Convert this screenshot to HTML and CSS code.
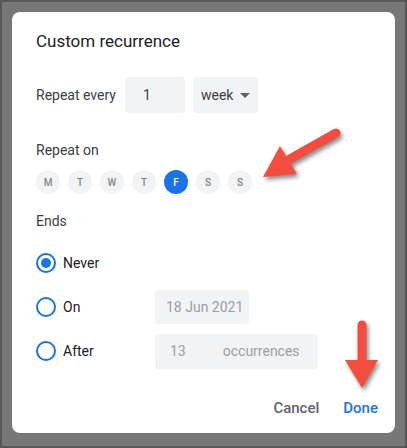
FILE: index.html
```html
<!DOCTYPE html>
<html lang="en">
<head>
    <meta charset="UTF-8">
    <meta name="viewport" content="width=device-width, initial-scale=1.0">
    <title>Custom recurrence</title>
    <link rel="stylesheet" href="styles.css">
</head>
<body>
    <div class="frame">
        <div class="dialog">
            <h1 class="title">Custom recurrence</h1>

            <!-- Repeat every -->
            <div class="repeat-row">
                <span class="label">Repeat every</span>
                <div class="field num">1</div>
                <div class="field select">week <span class="caret"></span></div>
            </div>

            <!-- Repeat on -->
            <div class="section-label">Repeat on</div>
            <div class="days">
                <span class="day">M</span>
                <span class="day">T</span>
                <span class="day">W</span>
                <span class="day">T</span>
                <span class="day active">F</span>
                <span class="day">S</span>
                <span class="day">S</span>
            </div>

            <!-- Ends -->
            <div class="section-label ends">Ends</div>
            <div class="end-row">
                <span class="radio checked"></span>
                <span class="end-label">Never</span>
            </div>
            <div class="end-row">
                <span class="radio"></span>
                <span class="end-label">On</span>
                <div class="field date">18 Jun 2021</div>
            </div>
            <div class="end-row">
                <span class="radio"></span>
                <span class="end-label">After</span>
                <div class="field count"><span>13</span><span>occurrences</span></div>
            </div>

            <div class="actions">
                <button class="btn cancel">Cancel</button>
                <button class="btn done">Done</button>
            </div>
        </div>
    </div>

    <!-- Annotation arrows -->
    <svg class="arrows" width="407" height="448" viewBox="0 0 407 448">
        <g class="arrow">
            <line x1="336" y1="133" x2="290" y2="159" stroke="#f44c3f" stroke-width="9" stroke-linecap="round"/>
            <polygon points="263,177 280,146 297,174" fill="#f44c3f"/>
        </g>
        <g class="arrow">
            <line x1="362" y1="325" x2="362" y2="364" stroke="#f44c3f" stroke-width="9" stroke-linecap="round"/>
            <polygon points="345,360 378,360 362,388" fill="#f44c3f"/>
        </g>
    </svg>
</body>
</html>
```

FILE: styles.css
```css
body {
    margin: 0;
    font-family: Roboto, "Liberation Sans", sans-serif;
    background-color: #555;
}

.frame {
    width: 407px;
    height: 448px;
    border: 2px solid #585858;
    background-color: #777;
    padding: 10px;
    box-sizing: border-box;
}

.dialog {
    background-color: white;
    border-radius: 8px;
    width: 383px;
    height: 421px;
    padding: 17px 24px 0 24px;
    box-sizing: border-box;
    display: flex;
    flex-direction: column;
    color: #3c4043;
    font-size: 14px;
}

.title {
    margin: 0;
    font-size: 17px;
    line-height: 24px;
    font-weight: 400;
    color: #202124;
}

.repeat-row {
    display: flex;
    align-items: center;
    gap: 8px;
    margin-top: 24px;
}

.label {
    width: 81px;
}

.field {
    background-color: #f1f3f4;
    border-radius: 4px;
    height: 36px;
    display: flex;
    align-items: center;
    box-sizing: border-box;
    padding: 0 12px;
    white-space: nowrap;
}

.num {
    width: 60px;
    padding-left: 18px;
}

.select {
    width: 65px;
    padding-left: 8px;
    justify-content: space-between;
}

.caret {
    width: 0;
    height: 0;
    border-left: 5px solid transparent;
    border-right: 5px solid transparent;
    border-top: 5px solid #5f6368;
    margin-right: -4px;
}

.section-label {
    margin-top: 27px;
    line-height: 20px;
}

.days {
    display: flex;
    gap: 8px;
    margin-top: 10px;
}

.day {
    width: 24px;
    height: 24px;
    border-radius: 50%;
    background-color: #f1f3f4;
    color: #80868b;
    font-size: 10px;
    font-weight: 500;
    display: flex;
    align-items: center;
    justify-content: center;
}

.day.active {
    background-color: #1a73e8;
    color: white;
}

.ends {
    margin-top: 17px;
}

.end-row {
    display: flex;
    align-items: center;
    height: 44px;
}

.ends + .end-row {
    margin-top: 10px;
}

.radio {
    width: 20px;
    height: 20px;
    border: 2px solid #1a73e8;
    border-radius: 50%;
    box-sizing: border-box;
    display: flex;
    align-items: center;
    justify-content: center;
}

.radio.checked::after {
    content: "";
    width: 10px;
    height: 10px;
    border-radius: 50%;
    background-color: #1a73e8;
}

.end-label {
    width: 92px;
    margin-left: 7px;
    color: #202124;
}

.date {
    width: 94px;
    height: 34px;
    color: #9aa0a6;
    padding: 0 6px 0 11px;
}

.count {
    width: 163px;
    height: 35px;
    color: #9aa0a6;
    padding-left: 15px;
    gap: 37px;
}

.actions {
    display: flex;
    justify-content: flex-end;
    gap: 8px;
    margin-top: 17px;
    margin-right: -15px;
}

.btn {
    background: none;
    border: none;
    font-family: Roboto, "Liberation Sans", sans-serif;
    font-size: 15px;
    font-weight: 500;
    height: 36px;
    padding: 0 8px;
    border-radius: 4px;
}

.cancel {
    color: #5f6368;
}

.done {
    color: #1a73e8;
}

.arrows {
    position: absolute;
    top: 0;
    left: 0;
    pointer-events: none;
}

.arrow {
    filter: drop-shadow(2px 3px 2px rgba(0, 0, 0, 0.45));
}
```
